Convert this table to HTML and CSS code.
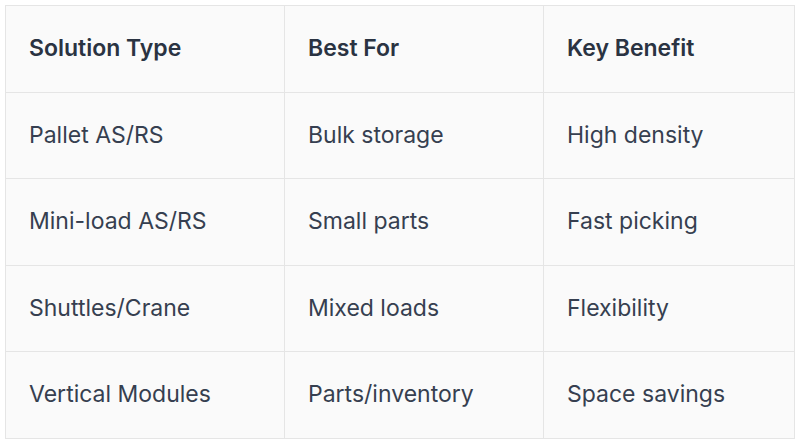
FILE: index.html
```html
<!DOCTYPE html>
<html>
<head>
<meta charset="utf-8">
<link rel="stylesheet" href="styles.css">
</head>
<body>
<div class="wrap">
<table class="grid">
  <colgroup>
    <col class="c1"><col class="c2"><col class="c3">
  </colgroup>
  <thead>
    <tr><th>Solution Type</th><th>Best For</th><th>Key Benefit</th></tr>
  </thead>
  <tbody>
    <tr><td>Pallet AS/RS</td><td>Bulk storage</td><td>High density</td></tr>
    <tr><td>Mini-load AS/RS</td><td>Small parts</td><td>Fast picking</td></tr>
    <tr><td>Shuttles/Crane</td><td>Mixed loads</td><td>Flexibility</td></tr>
    <tr><td>Vertical Modules</td><td>Parts/inventory</td><td>Space savings</td></tr>
  </tbody>
</table>
</div>
</body>
</html>
```
FILE: styles.css
```css
html, body { margin: 0; padding: 0; background: #ffffff; }
.wrap { padding: 5px 6px 0 5px; }
.grid {
  width: 789px;
  border-collapse: collapse;
  background: #fafafa;
  font-family: Inter, "Noto Sans", sans-serif;
  font-size: 23px;
  color: #363f50;
  table-layout: fixed;
}
.c1 { width: 279px; }
.c2 { width: 259px; }
.c3 { width: 251px; }
.grid th, .grid td {
  border: 1px solid #e5e5e5;
  padding: 28px 23px;
  line-height: 29.5px;
  text-align: left;
}
.grid th { font-weight: 600; color: #2a3342; }
```
